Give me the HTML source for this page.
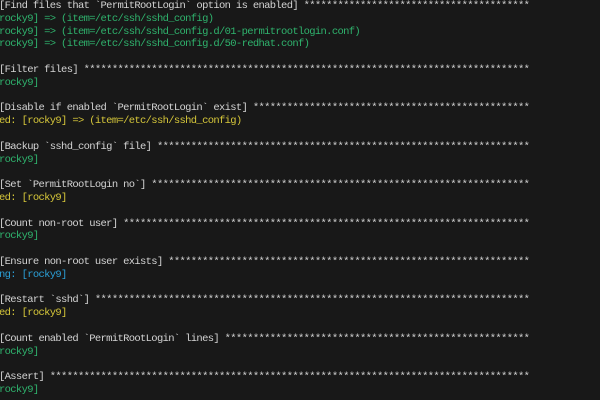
<!DOCTYPE html>
<html><head><meta charset="utf-8"><style>
html,body{margin:0;padding:0;width:600px;height:400px;overflow:hidden;background:#181818;}
pre{position:absolute;left:-1px;top:0px;margin:0;font-family:"Liberation Mono",monospace;font-size:10.5px;letter-spacing:-0.66px;line-height:12.8px;color:#d4d4d4;white-space:pre;}
.g{color:#2fb36d}.y{color:#d6c73a}.b{color:#2b9fd6}
</style></head><body>
<pre>[Find files that `PermitRootLogin` option is enabled] ****************************************
<span class="g">rocky9] =&gt; (item=/etc/ssh/sshd_config)</span>
<span class="g">rocky9] =&gt; (item=/etc/ssh/sshd_config.d/01-permitrootlogin.conf)</span>
<span class="g">rocky9] =&gt; (item=/etc/ssh/sshd_config.d/50-redhat.conf)</span>

[Filter files] *******************************************************************************
<span class="g">rocky9]</span>

[Disable if enabled `PermitRootLogin` exist] *************************************************
<span class="y">ed: [rocky9] =&gt; (item=/etc/ssh/sshd_config)</span>

[Backup `sshd_config` file] ******************************************************************
<span class="g">rocky9]</span>

[Set `PermitRootLogin no`] *******************************************************************
<span class="y">ed: [rocky9]</span>

[Count non-root user] ************************************************************************
<span class="g">rocky9]</span>

[Ensure non-root user exists] ****************************************************************
<span class="b">ng: [rocky9]</span>

[Restart `sshd`] *****************************************************************************
<span class="y">ed: [rocky9]</span>

[Count enabled `PermitRootLogin` lines] ******************************************************
<span class="g">rocky9]</span>

[Assert] *************************************************************************************
<span class="g">rocky9]</span>
</pre>
</body></html>
